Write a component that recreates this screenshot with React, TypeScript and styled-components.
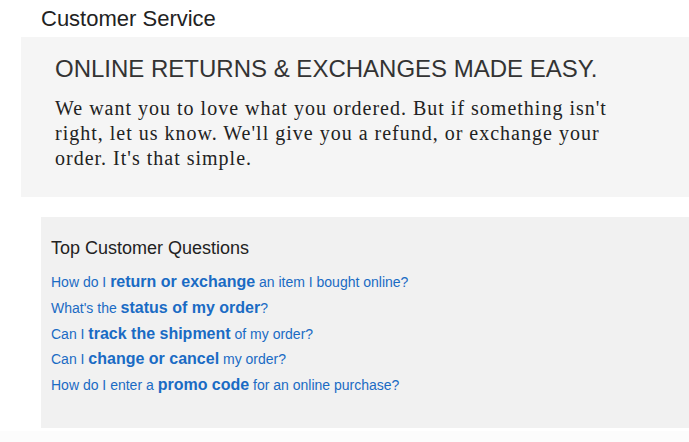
import React from "react";
import styled, { createGlobalStyle } from "styled-components";

const Global = createGlobalStyle`
  html, body { margin: 0; padding: 0; background: #ffffff; }
  body { font-family: "Liberation Sans", Arial, sans-serif; }
`;

const Page = styled.div`
  width: 689px;
  height: 442px;
  overflow: hidden;
  display: flex;
  flex-direction: column;
`;

const PageTitle = styled.h1`
  margin: 0;
  padding: 7px 0 0 41px;
  height: 37px;
  box-sizing: border-box;
  font-size: 22px;
  font-weight: 400;
  line-height: 24px;
  color: #222;
`;

const Hero = styled.section`
  margin-left: 21px;
  height: 160px;
  background: #f5f5f5;
  padding: 18px 0 0 34px;
  box-sizing: border-box;
`;

const HeroTitle = styled.h2`
  margin: 0;
  font-size: 24px;
  font-weight: 400;
  line-height: 28px;
  color: #333;
`;

const HeroText = styled.p`
  margin: 13px 0 0;
  width: 570px;
  font-family: "Liberation Serif", "Times New Roman", serif;
  font-size: 20px;
  line-height: 25px;
  letter-spacing: 1px;
  color: #222;
`;

const Questions = styled.section`
  margin: 20px 0 0 41px;
  height: 211px;
  background: #f1f1f1;
  padding: 20px 0 0 10px;
  box-sizing: border-box;
`;

const QTitle = styled.h3`
  margin: 0 0 12px;
  font-size: 18px;
  font-weight: 400;
  line-height: 22px;
  color: #222;
`;

const QList = styled.ul`
  list-style: none;
  margin: 0;
  padding: 0;
  display: flex;
  flex-direction: column;
`;

const QItem = styled.li`
  height: 25.8px;
  font-size: 14px;
  line-height: 22px;
`;

const QLink = styled.a`
  color: #1a6bc4;
  text-decoration: none;
  b {
    font-size: 16px;
    font-weight: 700;
  }
`;

const Footer = styled.div`
  margin-top: 3px;
  flex: 1;
  background: #fcfcfc;
`;

const questions: [string, string, string][] = [
  ["How do I ", "return or exchange", " an item I bought online?"],
  ["What's the ", "status of my order", "?"],
  ["Can I ", "track the shipment", " of my order?"],
  ["Can I ", "change or cancel", " my order?"],
  ["How do I enter a ", "promo code", " for an online purchase?"],
];

export default function App() {
  return (
    <Page>
      <Global />
      <PageTitle>Customer Service</PageTitle>
      <Hero>
        <HeroTitle>ONLINE RETURNS &amp; EXCHANGES MADE EASY.</HeroTitle>
        <HeroText>
          We want you to love what you ordered. But if something isn't right, let us know. We'll give you a refund, or
          exchange your order. It's that simple.
        </HeroText>
      </Hero>
      <Questions>
        <QTitle>Top Customer Questions</QTitle>
        <QList>
          {questions.map(([a, b, c]) => (
            <QItem key={b}>
              <QLink href="#">
                {a}
                <b>{b}</b>
                {c}
              </QLink>
            </QItem>
          ))}
        </QList>
      </Questions>
      <Footer />
    </Page>
  );
}
